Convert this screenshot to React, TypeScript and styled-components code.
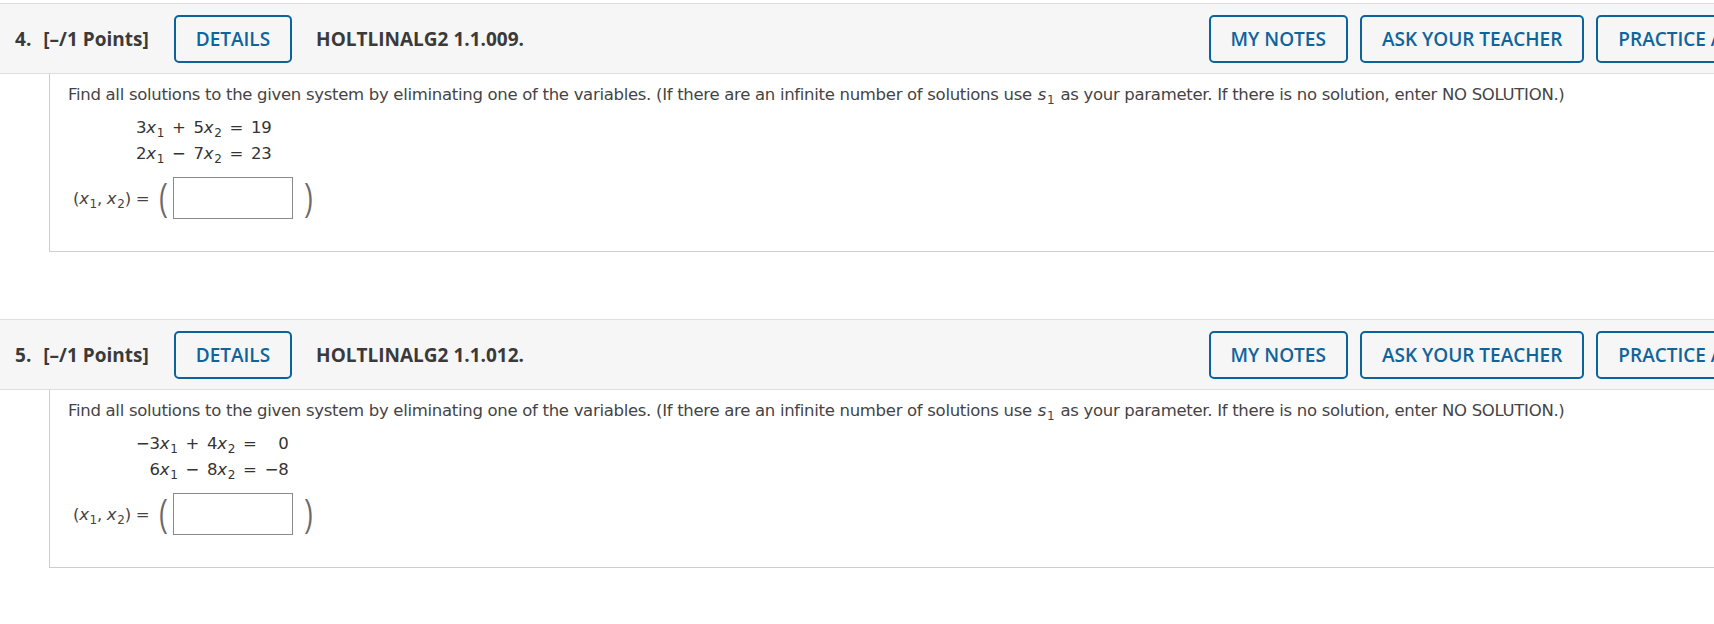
import React from "react";
import styled, { createGlobalStyle } from "styled-components";

const GlobalStyle = createGlobalStyle`
  html, body {
    margin: 0;
    padding: 0;
    background: #ffffff;
    overflow: hidden;
  }
  body {
    font-family: "DejaVu Sans", Verdana, sans-serif;
  }
`;

type Term = { coef: string; sub: string };

interface QuestionData {
  number: number;
  code: string;
  rows: { a: Term; op: string; b: Term; rhs: string }[];
}

const questions: QuestionData[] = [
  {
    number: 4,
    code: "HOLTLINALG2 1.1.009.",
    rows: [
      { a: { coef: "3", sub: "1" }, op: "+", b: { coef: "5", sub: "2" }, rhs: "19" },
      { a: { coef: "2", sub: "1" }, op: "−", b: { coef: "7", sub: "2" }, rhs: "23" },
    ],
  },
  {
    number: 5,
    code: "HOLTLINALG2 1.1.012.",
    rows: [
      { a: { coef: "−3", sub: "1" }, op: "+", b: { coef: "4", sub: "2" }, rhs: "0" },
      { a: { coef: "6", sub: "1" }, op: "−", b: { coef: "8", sub: "2" }, rhs: "−8" },
    ],
  },
];

const Page = styled.div`
  width: 1838px;
  padding-top: 3px;
`;

const Question = styled.section`
  margin-bottom: 67px;
`;

const Header = styled.header`
  display: flex;
  align-items: center;
  height: 71px;
  box-sizing: border-box;
  padding: 0 15px;
  background: #f6f6f6;
  border-top: 1px solid #dedede;
  border-bottom: 1px solid #dedede;
  font-family: "Open Sans", "Noto Sans", sans-serif;
  font-size: 19px;
  color: #3a3a3a;
`;

const Number = styled.span`
  font-weight: 700;
  margin-right: 12px;
`;

const Points = styled.span`
  font-weight: 700;
  margin-right: 25px;
`;

const Code = styled.span`
  font-weight: 700;
  margin-left: 24px;
`;

const Actions = styled.div`
  display: flex;
  gap: 12px;
  margin-left: auto;
`;

const OutlineButton = styled.button`
  height: 48px;
  box-sizing: border-box;
  padding: 0 20px;
  border: 2px solid #0b639c;
  border-radius: 5px;
  background: transparent;
  color: #0f649b;
  font-family: inherit;
  font-size: 19px;
  font-weight: 600;
  white-space: nowrap;
  cursor: pointer;
`;

const Body = styled.div`
  margin-left: 49px;
  border-left: 1px solid #cdcdcd;
  border-bottom: 1px solid #cdcdcd;
  padding: 10px 0 32px 18px;
  color: #444444;
  font-size: 16.5px;
  letter-spacing: -0.3px;
`;

const Prompt = styled.p`
  margin: 0;
  line-height: 22px;
  white-space: nowrap;
`;

const Param = styled.span`
  margin: 0 6px;
`;

const System = styled.table`
  border-collapse: collapse;
  margin: 9px 0 0 64px;
  color: #333333;
`;

const Cell = styled.td<{ $align?: "left" | "center" | "right" }>`
  padding: 0 4px;
  height: 26px;
  line-height: 26px;
  text-align: ${({ $align = "right" }) => $align};
  white-space: nowrap;
`;

const Var = styled.span`
  font-style: italic;
`;

const Sub = styled.sub`
  font-size: 12px;
  font-style: normal;
  vertical-align: -4px;
  line-height: 0;
  margin-left: 1px;
`;

const Answer = styled.div`
  display: flex;
  align-items: center;
  margin: 10px 0 0 5px;
  color: #444444;
`;

const Label = styled.span`
  margin-right: 8px;
`;

const Paren = styled.span<{ $side: "left" | "right" }>`
  display: inline-block;
  font-family: "Liberation Sans", sans-serif;
  font-size: 36px;
  line-height: 1;
  color: #6a6a6a;
  transform: scaleX(0.7);
  margin: ${({ $side }) => ($side === "left" ? "0 4px 0 0" : "0 0 0 10px")};
`;

const AnswerBox = styled.input`
  width: 120px;
  height: 42px;
  box-sizing: border-box;
  border: 1px solid #8a8a8a;
  border-radius: 0;
  background: #ffffff;
  margin: 0;
  padding: 0 6px;
`;

const X = ({ sub }: { sub: string }) => (
  <>
    <Var>x</Var>
    <Sub>{sub}</Sub>
  </>
);

const QuestionBlock = ({ q }: { q: QuestionData }) => (
  <Question>
    <Header>
      <Number>{q.number}.</Number>
      <Points>[–/1 Points]</Points>
      <OutlineButton>DETAILS</OutlineButton>
      <Code>{q.code}</Code>
      <Actions>
        <OutlineButton>MY NOTES</OutlineButton>
        <OutlineButton>ASK YOUR TEACHER</OutlineButton>
        <OutlineButton>PRACTICE ANOTHER</OutlineButton>
      </Actions>
    </Header>
    <Body>
      <Prompt>
        Find all solutions to the given system by eliminating one of the
        variables. (If there are an infinite number of solutions use
        <Param>
          <Var>s</Var>
          <Sub>1</Sub>
        </Param>
        as your parameter. If there is no solution, enter NO SOLUTION.)
      </Prompt>
      <System>
        <tbody>
          {q.rows.map((r, i) => (
            <tr key={i}>
              <Cell>
                {r.a.coef}
                <X sub={r.a.sub} />
              </Cell>
              <Cell $align="center">{r.op}</Cell>
              <Cell>
                {r.b.coef}
                <X sub={r.b.sub} />
              </Cell>
              <Cell $align="center">=</Cell>
              <Cell>{r.rhs}</Cell>
            </tr>
          ))}
        </tbody>
      </System>
      <Answer>
        <Label>
          (<X sub="1" />, <X sub="2" />) =
        </Label>
        <Paren $side="left">(</Paren>
        <AnswerBox type="text" />
        <Paren $side="right">)</Paren>
      </Answer>
    </Body>
  </Question>
);

export default function App() {
  return (
    <>
      <GlobalStyle />
      <Page>
        {questions.map((q) => (
          <QuestionBlock key={q.number} q={q} />
        ))}
      </Page>
    </>
  );
}
